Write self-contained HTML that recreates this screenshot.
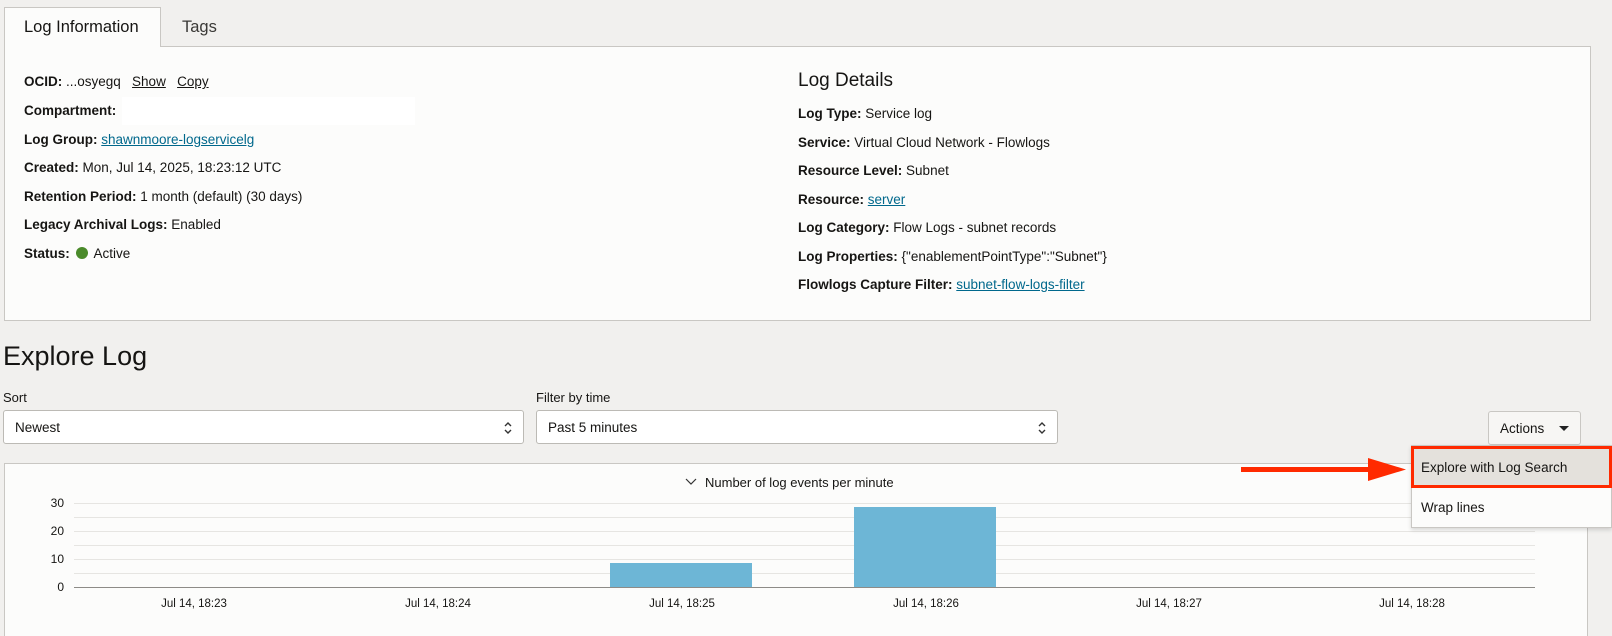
<!DOCTYPE html>
<html style="width:1612px;height:636px;overflow:hidden"><head><meta charset="utf-8"><style>
*{box-sizing:border-box;margin:0;padding:0}
body{width:1612px;height:636px;overflow:hidden;background:#f1f0ee;font-family:"Liberation Sans",Arial,sans-serif;color:#161513;position:relative;font-size:13.5px}
.abs{position:absolute;white-space:nowrap}
.tab{position:absolute;left:4px;top:7px;width:157px;height:40px;background:#fcfcfb;border:1px solid #c9c7c3;border-bottom:none;z-index:2}
.panel{position:absolute;left:4px;top:46px;width:1587px;height:275px;background:#fcfcfb;border:1px solid #c9c7c3}
b{font-weight:bold}
a{color:#00688c;text-decoration:underline}
.lnk{color:#161513;text-decoration:underline}
.row{position:absolute;white-space:nowrap;line-height:16px}
.sel{position:absolute;top:410px;height:34px;background:#fff;border:1px solid #bcbab5;border-radius:3px}
.sel span{position:absolute;left:11px;top:9px;font-size:13.5px}
.chart{position:absolute;left:4px;top:463px;width:1584px;height:173px;background:#fcfcfb;border:1px solid #c9c7c3;border-bottom:none}
.g{position:absolute;left:74px;width:1461px;height:1px;background:#e6e5e2}
.yl{position:absolute;left:40px;width:24px;text-align:right;font-size:12px;line-height:12px}
.xl{position:absolute;top:598px;width:120px;text-align:center;font-size:11.5px}
.bar{position:absolute;background:#6db6d6}
</style></head><body>
<div class="tab"></div>
<div class="abs" style="left:24px;top:18px;font-size:16.5px;z-index:3">Log Information</div>
<div class="abs" style="left:182px;top:18px;font-size:16.5px;color:#3a3936">Tags</div>
<div class="panel"></div>
<div style="position:absolute;left:122px;top:97px;width:293px;height:28px;background:#fff"></div>
<div class="row" style="left:24px;top:74px"><b>OCID:</b> ...osyegq &nbsp;&nbsp;<span class="lnk">Show</span> &nbsp;&nbsp;<span class="lnk">Copy</span></div>
<div class="row" style="left:24px;top:103px"><b>Compartment:</b></div>
<div class="row" style="left:24px;top:132px"><b>Log Group:</b> <a>shawnmoore-logservicelg</a></div>
<div class="row" style="left:24px;top:160px"><b>Created:</b> Mon, Jul 14, 2025, 18:23:12 UTC</div>
<div class="row" style="left:24px;top:189px"><b>Retention Period:</b> 1 month (default) (30 days)</div>
<div class="row" style="left:24px;top:217px"><b>Legacy Archival Logs:</b> Enabled</div>
<div class="row" style="left:24px;top:246px"><b>Status:</b> <span style="display:inline-block;width:12px;height:12px;border-radius:50%;background:#4a8a2a;vertical-align:-1px;margin:0 6px 0 2px"></span>Active</div>

<div class="abs" style="left:798px;top:70px;font-size:19px">Log Details</div>
<div class="row" style="left:798px;top:106px"><b>Log Type:</b> Service log</div>
<div class="row" style="left:798px;top:135px"><b>Service:</b> Virtual Cloud Network - Flowlogs</div>
<div class="row" style="left:798px;top:163px"><b>Resource Level:</b> Subnet</div>
<div class="row" style="left:798px;top:192px"><b>Resource:</b> <a>server</a></div>
<div class="row" style="left:798px;top:220px"><b>Log Category:</b> Flow Logs - subnet records</div>
<div class="row" style="left:798px;top:249px"><b>Log Properties:</b> {"enablementPointType":"Subnet"}</div>
<div class="row" style="left:798px;top:277px"><b>Flowlogs Capture Filter:</b> <a>subnet-flow-logs-filter</a></div>

<div class="abs" style="left:3px;top:341px;font-size:27px">Explore Log</div>
<div class="abs" style="left:3px;top:390px;font-size:13px">Sort</div>
<div class="abs" style="left:536px;top:390px;font-size:13px">Filter by time</div>
<div class="sel" style="left:3px;width:521px"><span>Newest</span><svg style="position:absolute;right:10px;top:9px" width="10" height="16" viewBox="0 0 10 16"><path d="M2 6l3-3 3 3M2 10l3 3 3-3" stroke="#333" stroke-width="1.4" fill="none"/></svg></div>
<div class="sel" style="left:536px;width:522px"><span>Past 5 minutes</span><svg style="position:absolute;right:10px;top:9px" width="10" height="16" viewBox="0 0 10 16"><path d="M2 6l3-3 3 3M2 10l3 3 3-3" stroke="#333" stroke-width="1.4" fill="none"/></svg></div>
<div style="position:absolute;left:1488px;top:411px;width:93px;height:34px;background:#f7f6f4;border:1px solid #c9c7c3;border-radius:3px"><span class="abs" style="left:11px;top:9px;font-size:13.5px">Actions</span><svg style="position:absolute;left:70px;top:14px" width="10" height="6"><path d="M0 0h10L5 5z" fill="#222"/></svg></div>

<div class="chart"></div>
<div class="abs" style="left:685px;top:475px;font-size:13px"><svg width="12" height="8" style="margin-right:8px;vertical-align:1px"><path d="M1 1l5 5 5-5" stroke="#333" stroke-width="1.2" fill="none"/></svg>Number of log events per minute</div>
<div class="g" style="top:503px"></div><div class="g" style="top:517px"></div><div class="g" style="top:531px"></div><div class="g" style="top:545px"></div><div class="g" style="top:559px"></div><div class="g" style="top:573px"></div>
<div class="g" style="top:587px;background:#8d8b87"></div>
<div class="yl" style="top:497px">30</div><div class="yl" style="top:525px">20</div><div class="yl" style="top:553px">10</div><div class="yl" style="top:581px">0</div>
<div class="bar" style="left:610px;top:563px;width:142px;height:24px"></div>
<div class="bar" style="left:854px;top:507px;width:142px;height:80px"></div>
<div class="xl" style="left:134px">Jul 14, 18:23</div>
<div class="xl" style="left:378px">Jul 14, 18:24</div>
<div class="xl" style="left:622px">Jul 14, 18:25</div>
<div class="xl" style="left:866px">Jul 14, 18:26</div>
<div class="xl" style="left:1109px">Jul 14, 18:27</div>
<div class="xl" style="left:1352px">Jul 14, 18:28</div>

<div style="position:absolute;left:1411px;top:445px;width:201px;height:83px;background:#fcfcfb;border:1px solid #c9c7c3;box-shadow:0 2px 4px rgba(0,0,0,.15)"></div>
<div style="position:absolute;left:1411px;top:446px;width:201px;height:42px;background:#e4e1dc;border:3px solid #ff2a00"></div>
<div class="abs" style="left:1421px;top:460px;font-size:13.5px">Explore with Log Search</div>
<div class="abs" style="left:1421px;top:500px;font-size:13.5px">Wrap lines</div>
<svg style="position:absolute;left:1240px;top:455px" width="170" height="30"><rect x="1" y="12" width="130" height="5" fill="#ff2a00"/><path d="M128 3L166 14.5 128 26z" fill="#ff2a00"/></svg>
</body></html>
